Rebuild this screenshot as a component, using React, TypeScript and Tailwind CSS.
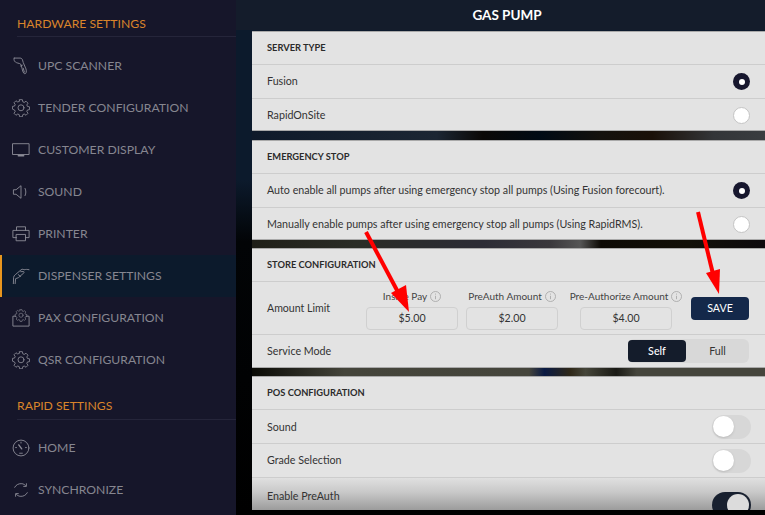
import React from "react"

const iconProps = {
  width: 18,
  height: 18,
  viewBox: "0 0 20 20",
  fill: "none",
  stroke: "#8c8c97",
  strokeWidth: 1,
  strokeLinecap: "round" as const,
  strokeLinejoin: "round" as const,
}

const gearPath =
  "M8.4 1h3.2l.5 2.500 1.700.7 2.100-1.400 2.300 2.300-1.400 2.100.7 1.700 2.500.5v3.200l-2.500.5-.7 1.700 1.400 2.100-2.300 2.300-2.100-1.400-1.700.7-.5 2.500H8.400l-.5-2.500-1.700-.7-2.100 1.400-2.300-2.300 1.400-2.100-.7-1.700L0 12.100V8.900l2.500-.5.7-1.700-1.400-2.100 2.300-2.300 2.100 1.400 1.700-.7z"

const GearIcon = () => (
  <svg {...iconProps}>
    <g transform="translate(0.5 -0.2) scale(0.95)">
      <path d={gearPath} />
      <circle cx="10" cy="10.500" r="3.500" />
    </g>
  </svg>
)

const ScannerIcon = () => (
  <svg {...iconProps}>
    <path d="M2.500 1.200h6.500c1.500 0 2.300.9 2.700 2.200l.8 2.800 3 7c.5 1.400.6 2.800.2 4.200-.3 1.200-1.900 1.500-2.700.5-1-1.400-1.400-3.200-1.800-4.900l-1-4.100c-.3-1-1-1.500-2-1.700-2.400-.5-4.300-1.100-5.300-2.500-.8-1.100-1-3.300-.4-3.500z" />
    <path d="M11.500 9.200l-2 .8M12.500 12.500l1.200 4.200" />
  </svg>
)

const MonitorIcon = () => (
  <svg {...iconProps}>
    <rect x="1" y="3" width="18" height="12" />
    <path d="M7 16.300h6" strokeWidth="1.600" />
  </svg>
)

const SoundIcon = () => (
  <svg {...iconProps}>
    <path d="M2 7.500h2.500L10 3v14l-5.500-4.500H2z" />
    <path d="M14.500 6c1.200 2.600 1.200 5.400 0 8" />
  </svg>
)

const PrinterIcon = () => (
  <svg {...iconProps}>
    <path d="M5 6V2h10v4" />
    <path d="M5 14H1V6h18v8h-4" />
    <rect x="5" y="10.500" width="10" height="7" />
  </svg>
)

const NozzleIcon = () => (
  <svg {...iconProps}>
    <path d="M1.500 18.500l.3-7c.1-1.200.9-2.200 1.900-3L10 3.200c.8-.7 1.600-.9 2.400-.6l1 .5c1.800-.5 3.600-.6 5.500-.1" />
    <path d="M3.500 18.500l.5-5.500 3.200-1.200 6-5.300c.6-.6.3-1.400-.5-1.500l-3 .2" />
    <path d="M7 8.500l2.500 2" />
  </svg>
)

const PaxIcon = () => (
  <svg {...iconProps}>
    <path d="M4 8H1v11h18V8h-3" />
    <g transform="translate(3.400 0) scale(0.66)">
      <path d={gearPath} />
      <circle cx="10" cy="10.500" r="3.500" />
    </g>
  </svg>
)

const GaugeIcon = () => (
  <svg {...iconProps}>
    <circle cx="10" cy="10" r="8.800" />
    <path d="M7.500 6.500l3.300 4.500" strokeWidth="1.500" />
    <path d="M10 3.500v1M4 9.500h1M15 9.500h1M8.500 15.800h3" />
  </svg>
)

const SyncIcon = () => (
  <svg {...iconProps}>
    <path d="M3 7C4.500 4 7.800 2.600 11 3c1.600.2 3 .9 4 2" />
    <path d="M17 13c-1.500 3-4.800 4.400-8 4-1.600-.2-3-.9-4-2" />
    <path d="M16 3v3h-3M4 17v-3h3" />
  </svg>
)

const menuItems = [
  { label: "UPC SCANNER", icon: <ScannerIcon /> },
  { label: "TENDER CONFIGURATION", icon: <GearIcon /> },
  { label: "CUSTOMER DISPLAY", icon: <MonitorIcon /> },
  { label: "SOUND", icon: <SoundIcon /> },
  { label: "PRINTER", icon: <PrinterIcon /> },
  { label: "DISPENSER SETTINGS", icon: <NozzleIcon />, active: true },
  { label: "PAX CONFIGURATION", icon: <PaxIcon /> },
  { label: "QSR CONFIGURATION", icon: <GearIcon /> },
]

const rapidItems = [
  { label: "HOME", icon: <GaugeIcon /> },
  { label: "SYNCHRONIZE", icon: <SyncIcon /> },
]

const MenuItem = ({ label, icon, active }: { label: string; icon: React.ReactNode; active?: boolean }) => (
  <div
    className={`flex h-[42px] items-center gap-[8px] text-[12.2px] text-[#868690] ${
      active ? "border-l-2 border-[#e8961e] bg-[#0c1a2c] pl-[10px]" : "pl-[12px]"
    }`}
  >
    <span className="flex w-[18px] shrink-0 items-center justify-center">{icon}</span>
    <span>{label}</span>
  </div>
)

const SectionHeading = ({ title, className }: { title: string; className: string }) => (
  <div className={`ml-[17px] flex items-end border-b border-[#25253a] text-[12.2px] text-[#d9842a] ${className}`}>
    {title}
  </div>
)

const CardHeader = ({ title }: { title: string }) => (
  <div className="flex h-[32px] items-center pl-[15px] text-[9.3px] font-bold text-[#2b2b2b]">{title}</div>
)

const Radio = ({ on }: { on?: boolean }) =>
  on ? (
    <span className="flex h-[17px] w-[17px] items-center justify-center rounded-full bg-[#17172e]">
      <span className="h-[6px] w-[6px] rounded-full bg-white" />
    </span>
  ) : (
    <span className="h-[17px] w-[17px] rounded-full border border-[#c4c4c4] bg-white" />
  )

const RadioRow = ({ label, on, last }: { label: string; on?: boolean; last?: boolean }) => (
  <div
    className={`flex items-center justify-between border-t border-[#cdcdcd] pl-[15px] pr-[15px] text-[10.7px] text-[#333333] ${
      last ? "h-[32px] pt-px" : "h-[34px]"
    }`}
  >
    <span>{label}</span>
    <Radio on={on} />
  </div>
)

const Toggle = () => (
  <span className="flex h-[24px] w-[39px] items-center rounded-full bg-[#d7d7d7] pl-[1px]">
    <span className="h-[21px] w-[21px] rounded-full bg-white shadow-sm" />
  </span>
)

const InfoIcon = () => (
  <svg width="11" height="11" viewBox="0 0 11 11" fill="none" stroke="#a3a3a3" strokeWidth="0.8" className="shrink-0">
    <circle cx="5.500" cy="5.500" r="5" />
    <path d="M5.500 4.800v3.400M5.500 2.600v1" />
  </svg>
)

const AmountField = ({ label, value, className }: { label: string; value: string; className: string }) => (
  <div className={`flex flex-col items-center ${className}`}>
    <div className="flex h-[20px] items-center gap-[3px] whitespace-nowrap text-[10px] text-[#444444]">
      {label}
      <InfoIcon />
    </div>
    <div className="flex h-[23px] w-[92px] items-center justify-center rounded-[4px] border border-[#d0d0d0] pt-[2px] text-[10.6px] text-[#333333]">
      {value}
    </div>
  </div>
)

const Card = ({ children, className }: { children: React.ReactNode; className: string }) => (
  <div className={`overflow-hidden border-y border-[#a9a9a9] bg-[#e3e3e3] ${className}`}>{children}</div>
)

const App = () => {
  return (
    <div className="relative flex h-[515px] w-[765px] overflow-hidden bg-black font-['Lato',sans-serif]">
      <aside className="w-[236px] shrink-0 bg-[#16162a]">
        <SectionHeading title="HARDWARE SETTINGS" className="h-[37px] pb-[3px]" />
        <div className="mt-[8px]">
          {menuItems.map((item) => (
            <MenuItem key={item.label} {...item} />
          ))}
        </div>
        <SectionHeading title="RAPID SETTINGS" className="h-[39px] pb-[4px]" />
        <div className="mt-[7px]">
          {rapidItems.map((item) => (
            <MenuItem key={item.label} {...item} />
          ))}
        </div>
      </aside>

      <main className="flex min-w-0 flex-1 flex-col bg-[linear-gradient(180deg,#0c1a2c_0%,#0c1a2c_35%,#020406_47%,#000000_100%)]">
        <header className="flex h-[30px] shrink-0 items-center justify-center bg-[#141c2b] pl-[13px] text-[13.500px] font-bold text-white">
          GAS PUMP
        </header>

        <div className="ml-[16px] mt-px flex flex-col">
          <Card className="h-[100px]">
            <CardHeader title="SERVER TYPE" />
            <RadioRow label="Fusion" on />
            <RadioRow label="RapidOnSite" last />
          </Card>
          <div className="h-[9px] bg-[linear-gradient(90deg,#0f1a2a_0%,#1c2633_36%,#0a0806_45%,#000a14_56%,#14110d_68%,#1a1008_78%,#333538_90%,#3a3d40_100%)]" />
          <Card className="h-[100px]">
            <CardHeader title="EMERGENCY STOP" />
            <RadioRow label="Auto enable all pumps after using emergency stop all pumps (Using Fusion forecourt)." on />
            <RadioRow label="Manually enable pumps after using emergency stop all pumps (Using RapidRMS)." last />
          </Card>
          <div className="h-[8px] bg-[linear-gradient(90deg,#1f1f18_0%,#2a2c26_20%,#2c2c35_45%,#3a383c_58%,#555555_64%,#0d0a05_68%,#121008_85%,#0d0a0d_100%)]" />
          <Card className="h-[120px]">
            <CardHeader title="STORE CONFIGURATION" />
            <div className="flex h-[53px] items-center border-t border-[#cdcdcd] pl-[15px] text-[10.600px] text-[#333333]">
              <span className="w-[99px] shrink-0 pt-[2px]">Amount Limit</span>
              <AmountField label="Inside Pay" value="$5.00" className="w-[92px]" />
              <AmountField label="PreAuth Amount" value="$2.00" className="ml-[8px] w-[92px]" />
              <AmountField label="Pre-Authorize Amount" value="$4.00" className="ml-[12px] w-[112px]" />
              <button className="ml-[9px] h-[23px] w-[58px] rounded-[4px] bg-[#14284a] text-[10.700px] text-white">
                SAVE
              </button>
            </div>
            <div className="flex h-[33px] items-center justify-between border-t border-[#cdcdcd] pl-[15px] pr-[16px] text-[10.700px] text-[#333333]">
              <span className="pt-px">Service Mode</span>
              <div className="flex h-[24px] w-[121px] items-center rounded-[6px] bg-[#d8d8d8] text-[10.700px]">
                <span className="flex h-[22px] w-[58px] items-center justify-center rounded-[4px] bg-[#141c2b] font-medium text-white">
                  Self
                </span>
                <span className="flex-1 text-center">Full</span>
              </div>
            </div>
          </Card>
          <div className="h-[8px] bg-[linear-gradient(90deg,#0a0a05_0%,#44443a_18%,#45453c_54%,#0a1a44_57%,#2f2818_62%,#454539_65%,#1a1a15_71%,#45453c_75%,#45453c_100%)]" />
          <div className="h-[134px] overflow-hidden border-t border-[#a9a9a9] bg-[#e3e3e3]">
            <CardHeader title="POS CONFIGURATION" />
            <div className="flex h-[34px] items-center justify-between border-t border-[#cdcdcd] pl-[15px] pr-[14px] text-[10.700px] text-[#333333]">
              <span className="pt-px">Sound</span>
              <Toggle />
            </div>
            <div className="flex h-[34px] items-center justify-between border-t border-[#cdcdcd] pl-[15px] pr-[14px] text-[10.700px] text-[#333333]">
              <span>Grade Selection</span>
              <Toggle />
            </div>
            <div className="flex h-[33px] items-start justify-between border-t border-[#cdcdcd] bg-[linear-gradient(180deg,#e0e0e0_0%,#c8c8c8_45%,#9c9c9c_100%)] pl-[15px] pr-[14px] text-[10.700px] text-[#333333]">
              <span className="mt-[10px]">Enable PreAuth</span>
              <span className="mt-[14px] flex h-[26px] w-[39px] shrink-0 items-center justify-end rounded-full bg-[#18202f] pr-[2px]">
                <span className="h-[22px] w-[22px] rounded-full bg-[#dcdcdc]" />
              </span>
            </div>
          </div>
        </div>
      </main>

      {/* annotation arrows drawn on top of the screenshot */}
      <svg className="pointer-events-none absolute left-0 top-0" width="765" height="515" viewBox="0 0 765 515">
        <path d="M366 232L399 294" stroke="#ff0000" strokeWidth="4" />
        <path d="M409 312L391 293L406 285z" fill="#ff0000" />
        <path d="M698 212L713 274" stroke="#ff0000" strokeWidth="4" />
        <path d="M719 294L706 273L720 269z" fill="#ff0000" />
      </svg>
    </div>
  )
}

export default App
